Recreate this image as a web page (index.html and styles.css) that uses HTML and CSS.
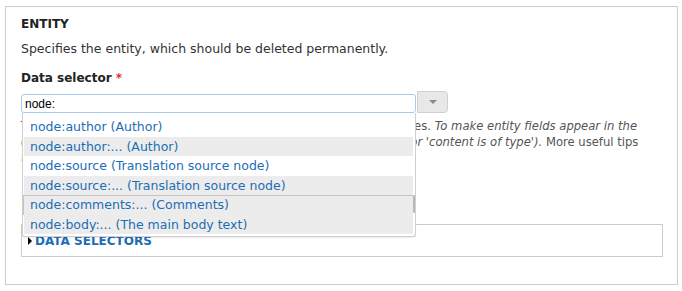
FILE: index.html
```html
<!DOCTYPE html>
<html lang="en">
<head>
  <meta charset="UTF-8" />
  <title>Entity</title>
  <link rel="stylesheet" href="styles.css">
</head>
<body>
  <div class="fieldset">
    <h3 class="legend">ENTITY</h3>
    <p class="intro">Specifies the entity, which should be deleted permanently.</p>

    <label class="label" for="selector">Data selector <span class="req">*</span></label>
    <div class="selector">
      <div class="field">
        <input id="selector" type="text" value="node:" autocomplete="off" />
        <ul class="suggest">
          <li>node:author (Author)</li>
          <li class="alt">node:author:... (Author)</li>
          <li>node:source (Translation source node)</li>
          <li class="alt">node:source:... (Translation source node)</li>
          <li class="alt sep">node:comments:... (Comments)</li>
          <li class="alt">node:body:... (The main body text)</li>
        </ul>
        <span class="thumb"></span>
      </div>
      <button class="drop" type="button"><span class="caret"></span></button>
    </div>
    <p class="help">The data selector helps you drill down into the data available to Rules. <em>To make entity fields appear in the data selector, you may have to use the condition 'entity has field' (or 'content is of type').</em> More useful tips about data selection is available in the online documentation.</p>

    <div class="subset">
      <span class="arrow"></span>
      <a href="#" class="subset-title">DATA SELECTORS</a>
    </div>
  </div>
</body>
</html>
```

FILE: styles.css
```css
:root {
  --border: #ccc;
  --link: #1c6db5;
  --text: #333;
  --row: #ececec;
}

html, body {
  margin: 0;
  padding: 0;
  background: #fff;
}

body {
  padding: 6px 4px 0 5px;
  font-family: 'DejaVu Sans', Verdana, sans-serif;
  font-size: 12.5px;
  color: var(--text);
}

.fieldset {
  border: 1px solid var(--border);
  height: 279px;
  padding: 0 14px 0 15px;
  box-sizing: border-box;
}

.legend {
  margin: 9px 0 0;
  font-size: 12px;
  font-weight: bold;
  line-height: 16px;
  color: #222;
}

.intro {
  margin: 9px 0 0;
  line-height: 16px;
}

.label {
  display: block;
  margin-top: 13px;
  font-size: 12px;
  font-weight: bold;
  line-height: 16px;
  color: #222;
}

.req {
  color: #e0322a;
}

.selector {
  display: flex;
  align-items: flex-end;
  margin-top: 5px;
}

.field {
  position: relative;
  width: 395px;
}

.field input {
  display: block;
  width: 100%;
  height: 19px;
  box-sizing: border-box;
  margin: 0;
  padding: 0 3px;
  border: 1px solid #a6cbf0;
  border-radius: 3px;
  font-family: 'Liberation Sans', Arial, sans-serif;
  font-size: 12px;
  color: #000;
  outline: none;
}

.drop {
  width: 31px;
  height: 22px;
  margin: 0 0 0 1px;
  padding: 0;
  border: 1px solid #d0d0d0;
  border-radius: 0 4px 4px 0;
  background: #e8e8e8;
  display: flex;
  align-items: center;
  justify-content: center;
}

.caret {
  width: 0;
  height: 0;
  border-left: 4px solid transparent;
  border-right: 4px solid transparent;
  border-top: 4px solid #8a8a8a;
}

.suggest {
  position: absolute;
  top: 19px;
  left: 1px;
  right: 0;
  z-index: 2;
  margin: 0;
  padding: 4px 2px 2px 1px;
  list-style: none;
  background: #fff;
  border: 1px solid #cfcfcf;
  border-top: none;
  border-radius: 0 0 3px 3px;
  box-shadow: 0 1px 1px rgba(0, 0, 0, 0.08);
}

.suggest li {
  height: 19.5px;
  line-height: 19px;
  padding-left: 6px;
  color: var(--link);
  white-space: nowrap;
}

.suggest li.alt {
  background: var(--row);
}

.suggest li.sep {
  border-top: 1px solid #c4c4c4;
  border-left: 1px solid #c4c4c4;
  height: 18.5px;
  line-height: 18px;
  margin-left: -1px;
}

.thumb {
  position: absolute;
  z-index: 3;
  right: 1px;
  top: 101px;
  width: 2px;
  height: 18px;
  background: #b8b8b8;
  border-radius: 1px;
}

.help {
  margin: 5px 0 0;
  max-width: 632px;
  font-size: 11.6px;
  line-height: 16px;
  color: #555;
}

.subset {
  margin-top: 58px;
  height: 33px;
  border: 1px solid var(--border);
  box-sizing: border-box;
  display: flex;
  align-items: center;
  padding: 0 0 0 6px;
  gap: 3px;
}

.arrow {
  width: 0;
  height: 0;
  border-top: 4px solid transparent;
  border-bottom: 4px solid transparent;
  border-left: 4px solid #000;
}

.subset-title {
  color: var(--link);
  font-weight: bold;
  text-decoration: none;
  font-size: 12px;
}
```
